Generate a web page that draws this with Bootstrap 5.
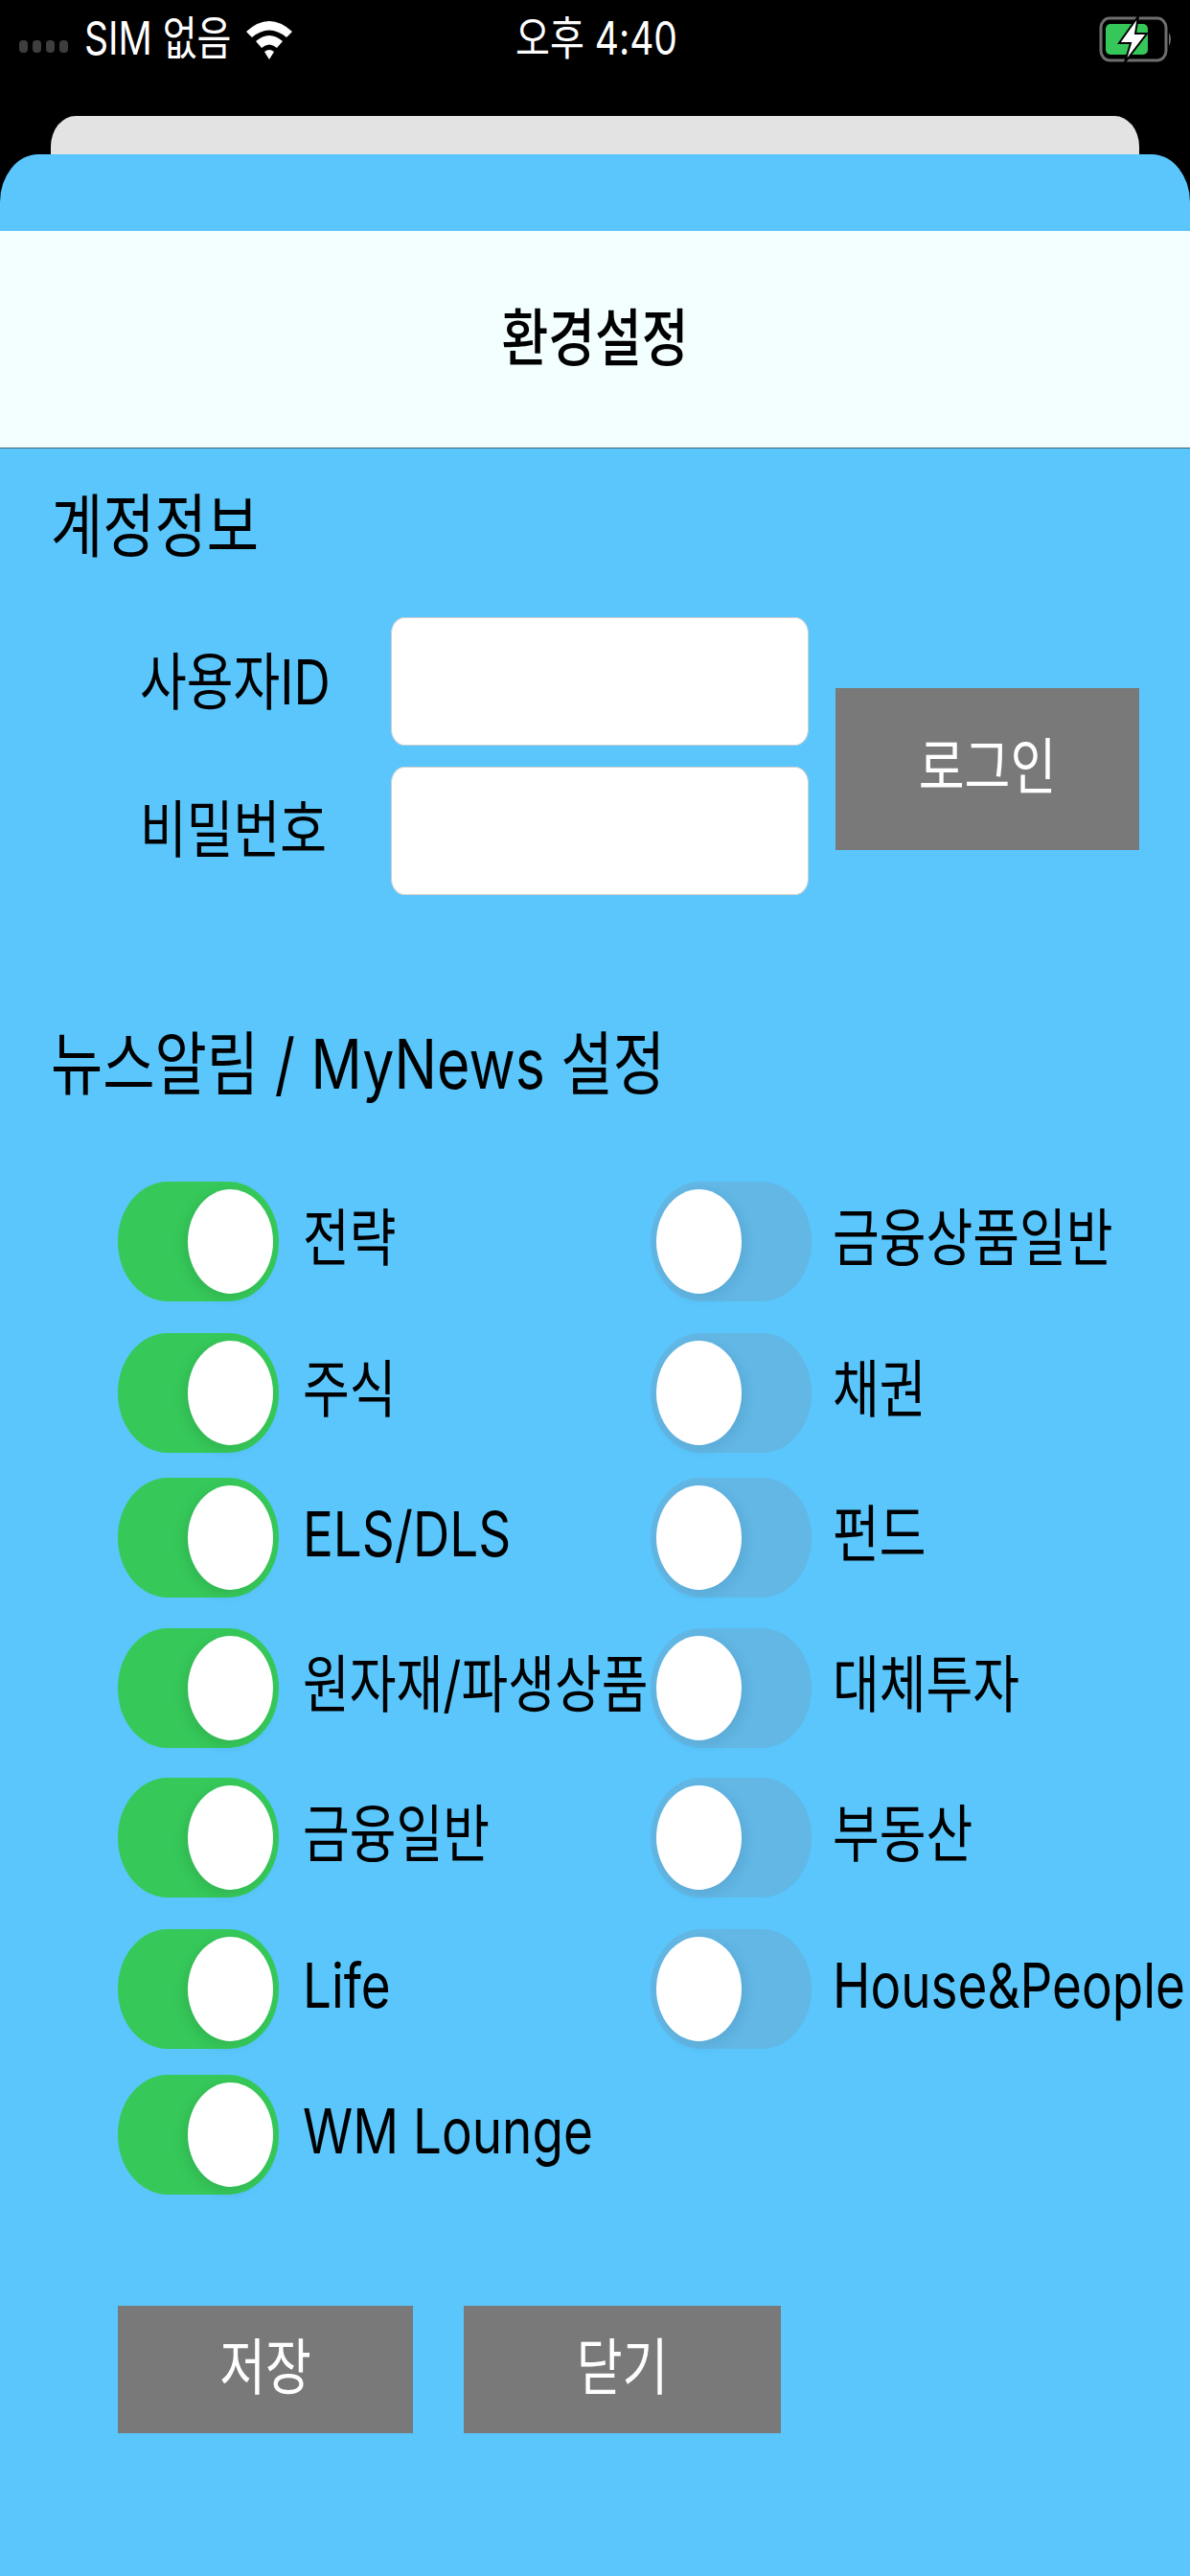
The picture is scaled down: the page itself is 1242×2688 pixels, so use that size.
<!DOCTYPE html>
<html lang="ko">
<head>
    <meta charset="UTF-8">
    <meta name="viewport" content="width=device-width, initial-scale=1.0">
    <title>환경설정</title>
    <link href="https://cdn.jsdelivr.net/npm/bootstrap@5.3.0/dist/css/bootstrap.min.css" rel="stylesheet">
    <style>
        html, body {
            height: 2688px;
            overflow: hidden;
        }
        body {
            background-color: #000;
            font-family: Inter, "Noto Sans CJK KR", sans-serif;
            color: #000;
        }
        /* the whole screenshot is stretched vertically, so text is too */
        .tall-text {
            display: inline-block;
            transform: scaleY(1.22);
            white-space: nowrap;
        }
        .status-bar {
            height: 121px;
            padding: 0 17px 0 20px;
            color: #fff;
            font-size: 39px;
        }
        .status-left {
            width: 400px;
            margin-top: -40px;
        }
        .status-time {
            margin-top: -40px;
        }
        .status-right {
            width: 400px;
            margin-top: -40px;
        }
        .signal-dots {
            gap: 5px;
            margin: 16px 17px 0 0;
        }
        .signal-dots span {
            width: 9px;
            height: 13px;
            border-radius: 4px;
            background-color: #3e3e3e;
        }
        .back-sheet {
            height: 40px;
            margin: 0 53px;
            background-color: #e3e3e3;
            border-radius: 26px 26px 0 0 / 32px 32px 0 0;
        }
        .main-sheet {
            height: 2527px;
            background-color: #5ac6fc;
            border-radius: 40px 40px 0 0 / 50px 50px 0 0;
            padding-top: 80px;
        }
        .sheet-title {
            height: 227px;
            background-color: #f3ffff;
            border-bottom: 1px solid #3d6478;
            font-size: 53px;
            font-weight: 500;
        }
        .section-title {
            font-size: 59px;
            line-height: 1;
            margin-left: 53px;
        }
        .account-title {
            margin-top: 51px;
        }
        .account-row {
            margin-top: 66px;
            padding-right: 53px;
        }
        .field-labels {
            width: 408px;
            padding: 29px 0 28px 146px;
            font-size: 53px;
            height: 290px;
        }
        .text-field {
            width: 436px;
            height: 134px;
            background-color: #fff;
            border: 1px solid #cfcfcf;
            border-radius: 14px / 17px;
        }
        .fields {
            gap: 22px;
        }
        .gray-btn {
            background-color: #797979;
            color: #fff;
            border: 0;
            border-radius: 0;
            font-size: 52px;
            padding: 0 0 4px;
        }
        .gray-btn:hover {
            background-color: #797979;
            color: #fff;
        }
        .login-btn {
            width: 317px;
            height: 169px;
            margin: 74px 0 0 28px;
        }
        .news-title {
            margin-top: 146px;
        }
        .switch-grid {
            display: grid;
            grid-template-columns: 556px 1fr;
            grid-template-rows: 158px 151px 157px 156px 158px 152px 125px;
            margin: 94px 0 0 123px;
            font-size: 53px;
        }
        .switch-item {
            gap: 25px;
            height: 125px;
        }
        .switch-item .tall-text {
            margin-top: -5px;
        }
        .ios-switch {
            position: relative;
            flex: none;
            width: 168px;
            height: 125px;
            border-radius: 52px / 62px;
            background-color: #36c95a;
        }
        .ios-switch::after {
            content: "";
            position: absolute;
            top: 8px;
            left: 73px;
            width: 89px;
            height: 109px;
            border-radius: 50%;
            background-color: #fff;
            box-shadow: -4px 4px 14px rgba(0, 0, 0, .1);
        }
        .ios-switch.switch-off {
            margin-right: -3px;
            background-color: #62b7e5;
        }
        .ios-switch.switch-off::after {
            left: 6px;
            box-shadow: 4px 4px 14px rgba(0, 0, 0, .08);
        }
        .bottom-row {
            margin: 116px 0 0 123px;
            gap: 53px;
        }
        .save-btn {
            width: 308px;
            height: 133px;
        }
        .close-btn {
            width: 331px;
            height: 133px;
        }
    </style>
</head>
<body>
    <div class="status-bar d-flex justify-content-between align-items-center">
        <div class="status-left d-flex align-items-center">
            <div class="signal-dots d-flex"><span></span><span></span><span></span><span></span></div>
            <span class="tall-text">SIM 없음</span>
            <svg class="ms-3" width="48" height="42" viewBox="0 0 48 42">
                <path d="M0 13 Q24 -9 48 13 L42 19 Q24 4 6 19 Z" fill="#fff"/>
                <path d="M10 23 Q24 11 38 23 L32 30 Q24 23 16 30 Z" fill="#fff"/>
                <path d="M19 34 Q24 30 29 34 L24 42 Z" fill="#fff"/>
            </svg>
        </div>
        <div class="status-time"><span class="tall-text">오후 4:40</span></div>
        <div class="status-right d-flex justify-content-end">
            <svg width="78" height="48" viewBox="0 0 78 48">
                <rect x="2" y="2" width="68" height="44" rx="9" ry="10" fill="none" stroke="#6e6e6e" stroke-width="3"/>
                <rect x="7" y="8" width="44" height="32" rx="5" fill="#35c759"/>
                <path d="M73 17 Q77 24 73 31 Z" fill="#6e6e6e"/>
                <path d="M41 0 L21 28 L33 28 L27 48 L50 18 L38 18 Z" fill="#fff" stroke="#000" stroke-width="2"/>
            </svg>
        </div>
    </div>

    <div class="back-sheet"></div>

    <div class="main-sheet">
        <div class="sheet-title d-flex justify-content-center align-items-center">
            <span class="tall-text">환경설정</span>
        </div>

        <div class="section-title account-title"><span class="tall-text">계정정보</span></div>

        <div class="account-row d-flex align-items-start">
            <div class="field-labels d-flex flex-column justify-content-between">
                <span class="tall-text">사용자ID</span>
                <span class="tall-text">비밀번호</span>
            </div>
            <div class="fields d-flex flex-column">
                <div class="text-field"></div>
                <div class="text-field"></div>
            </div>
            <button type="button" class="btn gray-btn login-btn"><span class="tall-text">로그인</span></button>
        </div>

        <div class="section-title news-title"><span class="tall-text">뉴스알림 / MyNews 설정</span></div>

        <div class="switch-grid">
            <div class="switch-item d-flex align-items-center"><span class="ios-switch"></span><span class="tall-text">전략</span></div>
            <div class="switch-item d-flex align-items-center"><span class="ios-switch switch-off"></span><span class="tall-text">금융상품일반</span></div>
            <div class="switch-item d-flex align-items-center"><span class="ios-switch"></span><span class="tall-text">주식</span></div>
            <div class="switch-item d-flex align-items-center"><span class="ios-switch switch-off"></span><span class="tall-text">채권</span></div>
            <div class="switch-item d-flex align-items-center"><span class="ios-switch"></span><span class="tall-text">ELS/DLS</span></div>
            <div class="switch-item d-flex align-items-center"><span class="ios-switch switch-off"></span><span class="tall-text">펀드</span></div>
            <div class="switch-item d-flex align-items-center"><span class="ios-switch"></span><span class="tall-text">원자재/파생상품</span></div>
            <div class="switch-item d-flex align-items-center"><span class="ios-switch switch-off"></span><span class="tall-text">대체투자</span></div>
            <div class="switch-item d-flex align-items-center"><span class="ios-switch"></span><span class="tall-text">금융일반</span></div>
            <div class="switch-item d-flex align-items-center"><span class="ios-switch switch-off"></span><span class="tall-text">부동산</span></div>
            <div class="switch-item d-flex align-items-center"><span class="ios-switch"></span><span class="tall-text">Life</span></div>
            <div class="switch-item d-flex align-items-center"><span class="ios-switch switch-off"></span><span class="tall-text">House&amp;People</span></div>
            <div class="switch-item d-flex align-items-center"><span class="ios-switch"></span><span class="tall-text">WM Lounge</span></div>
        </div>

        <div class="bottom-row d-flex">
            <button type="button" class="btn gray-btn save-btn"><span class="tall-text">저장</span></button>
            <button type="button" class="btn gray-btn close-btn"><span class="tall-text">닫기</span></button>
        </div>
    </div>

    <script src="https://cdn.jsdelivr.net/npm/bootstrap@5.3.0/dist/js/bootstrap.bundle.min.js"></script>
</body>
</html>
